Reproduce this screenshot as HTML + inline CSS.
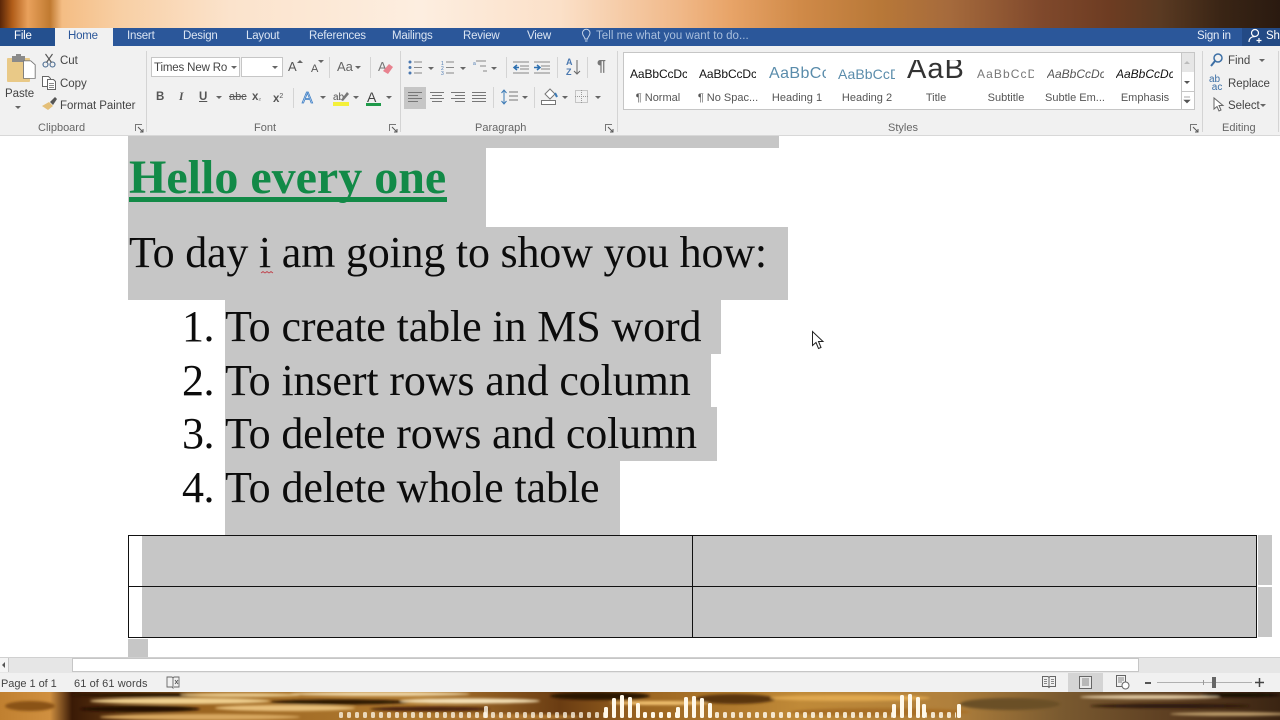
<!DOCTYPE html>
<html><head><meta charset="utf-8"><style>
html,body{margin:0;padding:0;width:1280px;height:720px;overflow:hidden;background:#fff}
body{position:relative;font-family:"Liberation Sans",sans-serif}
.a{position:absolute}
.t{position:absolute;white-space:nowrap;font-size:11.5px;color:#444;line-height:14px;letter-spacing:-.05px}
.tab{position:absolute;top:29px;color:#dbe5f3;font-size:11.5px;line-height:15px;white-space:nowrap;letter-spacing:-.2px}
.g{position:absolute;background:#c6c6c6}
.d{position:absolute;font-family:"Liberation Serif",serif;font-size:44px;line-height:50px;color:#0c0c0c;white-space:nowrap;letter-spacing:-.12px}
.sep{position:absolute;width:1px;background:#d4d4d4}
.gl{position:absolute;top:121px;font-size:11px;line-height:14px;color:#666;white-space:nowrap}
.st{position:absolute;white-space:nowrap;font-size:11px;line-height:14px;top:91px;color:#555;text-align:center;width:70px}
.sp{position:absolute;white-space:nowrap;overflow:hidden;top:66px;height:16px;line-height:16px;font-size:12px;color:#111}
svg{position:absolute;overflow:visible}
</style></head><body>
<div class="a" style="left:0;top:0;width:1280px;height:28px;background:linear-gradient(90deg,#5a2608 0,#b05c18 12px,#e9a15c 28px,#c07a30 50px,#f4bd84 62px,#f8cfa4 120px,#fbe3cc 230px,#fdeee0 420px,#fbe0c8 560px,#f0b888 680px,#e8a468 730px,#d08a48 800px,#b87838 880px,#a56a3c 950px,#80492c 1040px,#6d3c22 1110px,#5a3a22 1160px,#3a2515 1220px,#2a1a10 1280px)"></div>
<div class="a" style="left:0;top:692px;width:1280px;height:28px;overflow:hidden;background:linear-gradient(90deg,#c08030 0,#d09040 50px,#3a1a06 72px,#9a6420 200px,#b07a30 420px,#6a3c12 560px,#9a6420 640px,#c08a38 800px,#b0803c 950px,#7a5a30 1060px,#5a3c20 1180px,#3a2412 1280px)">
<svg style="left:0;top:0" width="1280" height="28"><defs><filter id="f" x="-10%" y="-100%" width="120%" height="300%"><feGaussianBlur stdDeviation="1.200"/></filter></defs>
<g filter="url(#f)">
<ellipse cx="150" cy="3" rx="80" ry="2" fill="#2a1204"/><ellipse cx="240" cy="3" rx="60" ry="2" fill="#e8c88a"/><ellipse cx="380" cy="2" rx="90" ry="2" fill="#f0d8a8"/>
<ellipse cx="180" cy="9" rx="90" ry="3" fill="#f0d090"/><ellipse cx="340" cy="10" rx="70" ry="2.500" fill="#2a1204"/><ellipse cx="470" cy="9" rx="70" ry="2.500" fill="#f5e2b8"/>
<ellipse cx="140" cy="17" rx="60" ry="3" fill="#241004"/><ellipse cx="285" cy="16" rx="70" ry="3" fill="#e8c07c"/><ellipse cx="430" cy="17" rx="60" ry="2.500" fill="#4a2408"/>
<ellipse cx="200" cy="25" rx="100" ry="3" fill="#d8a860"/><ellipse cx="500" cy="25" rx="80" ry="3" fill="#b07830"/>
<ellipse cx="600" cy="4" rx="50" ry="4" fill="#2a1406"/><ellipse cx="660" cy="11" rx="50" ry="2" fill="#f0c070"/><ellipse cx="735" cy="7" rx="40" ry="5" fill="#5a3410"/>
<ellipse cx="850" cy="6" rx="80" ry="3" fill="#e0a850"/><ellipse cx="880" cy="20" rx="90" ry="4" fill="#a87028"/>
<ellipse cx="1010" cy="12" rx="50" ry="6" fill="#6a5028"/><ellipse cx="1150" cy="5" rx="70" ry="2" fill="#e0c8a0"/><ellipse cx="1240" cy="3" rx="40" ry="2" fill="#140a04"/><ellipse cx="1170" cy="14" rx="80" ry="2" fill="#2a1608"/><ellipse cx="1230" cy="22" rx="60" ry="2" fill="#b89868"/><ellipse cx="30" cy="14" rx="25" ry="5" fill="#8a5218"/>
</g></svg></div>
<svg style="left:0;top:692px" width="1280" height="28"><defs><pattern id="dots" x="339" y="0" width="8" height="28" patternUnits="userSpaceOnUse"><rect x="0" y="20" width="4" height="6" rx="1.500" fill="#fff8e8"/></pattern></defs>
<rect x="339" y="0" width="270" height="28" fill="url(#dots)" opacity=".75"/><rect x="712" y="0" width="180" height="28" fill="url(#dots)" opacity=".85"/><rect x="926" y="0" width="30" height="28" fill="url(#dots)" opacity=".85"/><rect x="640" y="0" width="40" height="28" fill="url(#dots)"/>
<g fill="#fff8e8"><rect x="484" y="14" width="4" height="12" rx="1.500" opacity=".8"/><rect x="604" y="15" width="4" height="11" rx="1.500"/><rect x="612" y="6" width="4" height="20" rx="1.500"/><rect x="620" y="3" width="4" height="23" rx="1.500"/><rect x="628" y="5" width="4" height="21" rx="1.500"/><rect x="636" y="11" width="4" height="15" rx="1.500"/>
<rect x="676" y="15" width="4" height="11" rx="1.500"/><rect x="684" y="5" width="4" height="21" rx="1.500"/><rect x="692" y="4" width="4" height="22" rx="1.500"/><rect x="700" y="6" width="4" height="20" rx="1.500"/><rect x="708" y="11" width="4" height="15" rx="1.500"/>
<rect x="892" y="12" width="4" height="14" rx="1.500"/><rect x="900" y="3" width="4" height="23" rx="1.500"/><rect x="908" y="2" width="4" height="24" rx="1.500"/><rect x="916" y="5" width="4" height="21" rx="1.500"/><rect x="922" y="12" width="4" height="14" rx="1.500"/><rect x="957" y="12" width="4" height="14" rx="1.500"/></g></svg>

<!-- title bar / tabs -->
<div class="a" style="left:0;top:28px;width:1280px;height:18px;background:#2b579a"></div>
<div class="a" style="left:0;top:28px;width:55px;height:18px;background:#24508f"></div>
<div class="a" style="left:55px;top:28px;width:58px;height:18px;background:#f1f1f1"></div>
<div class="a" style="left:1242px;top:28px;width:38px;height:18px;background:#234a85"></div>
<div class="tab" style="left:14px;color:#fff">File</div>
<div class="tab" style="left:68px;color:#2b579a">Home</div>
<div class="tab" style="left:127px">Insert</div>
<div class="tab" style="left:183px">Design</div>
<div class="tab" style="left:246px">Layout</div>
<div class="tab" style="left:309px">References</div>
<div class="tab" style="left:392px">Mailings</div>
<div class="tab" style="left:463px">Review</div>
<div class="tab" style="left:527px">View</div>
<svg style="left:580px;top:28px" width="14" height="16" fill="none" stroke="#c5d4ea" stroke-width="1"><path d="M5 11C5 9 2.500 8 2.500 5a3.700 3.700 0 0 1 7.500 0C10 8 7.500 9 7.500 11zM5 13h2.500"/></svg>
<div class="tab" style="left:596px;color:#a9bfdd;letter-spacing:.04px">Tell me what you want to do...</div>
<div class="tab" style="left:1197px;color:#e6edf7">Sign in</div>
<svg style="left:1248px;top:28px" width="16" height="16" fill="none" stroke="#fff" stroke-width="1.200"><circle cx="7" cy="5" r="3.500"/><path d="M1 14c0-4 3-5.500 6-5.500M11 10v5M8.500 12.500h5"/></svg>
<div class="tab" style="left:1266px;color:#fff">Sh</div>

<!-- ribbon -->
<div class="a" style="left:0;top:46px;width:1280px;height:90px;background:#f1f1f1"></div>
<div class="sep" style="left:146px;top:51px;height:81px"></div>
<div class="sep" style="left:400px;top:51px;height:81px"></div>
<div class="sep" style="left:617px;top:51px;height:81px"></div>
<div class="sep" style="left:1202px;top:51px;height:81px"></div>
<div class="sep" style="left:1278px;top:51px;height:81px"></div>

<!-- clipboard -->
<svg style="left:6px;top:54px" width="30" height="30"><rect x="1" y="4" width="23" height="24" rx="1" fill="#e9c987"/><rect x="6" y="2" width="13" height="6" fill="#8a8a8a"/><rect x="10" y="0" width="5" height="3" fill="#8a8a8a"/><path d="M15 11h8l5 5v17H15z" transform="translate(4,-2) scale(.9,.8)" fill="#fff" stroke="#777"/></svg>
<div class="t" style="left:5px;top:87px">Paste</div>
<svg style="left:15px;top:106px" width="8" height="5"><path d="M0 0h6L3 3z" fill="#666"/></svg>
<svg style="left:42px;top:53px" width="16" height="15" fill="none" stroke="#46688f" stroke-width="1.100"><circle cx="3.500" cy="11.500" r="2.500"/><circle cx="10.500" cy="11.500" r="2.500"/><path d="M4.500 9.500L10.500 1M9.500 9.500L3.500 1" stroke="#555"/></svg>
<div class="t" style="left:60px;top:54px">Cut</div>
<svg style="left:42px;top:76px" width="15" height="14" fill="#fff" stroke="#666"><path d="M.5.500h6l2 2v8h-8z"/><path d="M5.500 3.500h6l2 2v8h-8z"/><path d="M7 7.500h5M7 9.500h5M7 11.500h5" stroke-width=".8"/></svg>
<div class="t" style="left:60px;top:77px">Copy</div>
<svg style="left:42px;top:97px" width="16" height="14"><path d="M0 9l7-4 4 4-5 4z" fill="#e4bf78"/><path d="M8 5l5-5 2 2-4 6z" fill="#555"/></svg>
<div class="t" style="left:60px;top:99px">Format Painter</div>
<div class="gl" style="left:38px">Clipboard</div>
<svg style="left:135px;top:124px" width="9" height="9" fill="none" stroke="#777"><path d="M.5 7V.5H7"/><path d="M3 3l5 5M5 8h3V5" stroke="#555"/></svg>

<!-- font -->
<div class="a" style="left:151px;top:57px;width:89px;height:20px;background:#fff;border:1px solid #c6c6c6;box-sizing:border-box"></div>
<div class="a" style="left:241px;top:57px;width:42px;height:20px;background:#fff;border:1px solid #c6c6c6;box-sizing:border-box"></div>
<div class="t" style="left:154px;top:61px;font-size:11.500px;letter-spacing:-.15px">Times New Ro</div>
<svg style="left:231px;top:66px" width="6" height="4"><path d="M0 0h6L3 3z" fill="#666"/></svg>
<svg style="left:272px;top:66px" width="6" height="4"><path d="M0 0h6L3 3z" fill="#666"/></svg>
<div class="t" style="left:288px;top:60px;font-size:13px;color:#555">A</div>
<svg style="left:297px;top:60px" width="6" height="4"><path d="M0 3L3 0l3 3z" fill="#666"/></svg>
<div class="t" style="left:311px;top:62px;font-size:11px;color:#555">A</div>
<svg style="left:318px;top:60px" width="6" height="4"><path d="M0 0h6L3 3z" fill="#666"/></svg>
<div class="sep" style="left:329px;top:57px;height:21px"></div>
<div class="t" style="left:337px;top:60px;font-size:13px;color:#666">Aa</div>
<svg style="left:355px;top:66px" width="6" height="4"><path d="M0 0h6L3 3z" fill="#666"/></svg>
<div class="sep" style="left:370px;top:57px;height:21px"></div>
<svg style="left:378px;top:59px" width="16" height="17"><text x="0" y="12" font-size="13" fill="#777" font-family="Liberation Sans">A</text><path d="M5 12l6-7 4 3-5 7z" fill="#e8828f"/></svg>
<div class="t" style="left:156px;top:90px;font-weight:bold;color:#555">B</div>
<div class="t" style="left:179px;top:90px;font-style:italic;font-family:'Liberation Serif',serif;font-weight:bold;color:#555">I</div>
<div class="t" style="left:199px;top:90px;text-decoration:underline;font-weight:bold;color:#555">U</div>
<svg style="left:216px;top:96px" width="6" height="4"><path d="M0 0h6L3 3z" fill="#666"/></svg>
<div class="t" style="left:229px;top:90px;text-decoration:line-through;color:#555;font-size:11px">abc</div>
<div class="t" style="left:252px;top:90px;font-weight:bold;color:#555">x<span style="font-size:7px;font-weight:normal">₂</span></div>
<div class="t" style="left:273px;top:90px;font-weight:bold;color:#555">x<span style="font-size:7px;font-weight:normal;vertical-align:4px">2</span></div>
<div class="sep" style="left:293px;top:88px;height:20px"></div>
<svg style="left:301px;top:89px" width="15" height="16"><text x="1" y="14" font-size="16" fill="#cfe0f5" stroke="#3f7fc4" stroke-width=".8" font-family="Liberation Sans">A</text></svg>
<svg style="left:320px;top:96px" width="6" height="4"><path d="M0 0h6L3 3z" fill="#666"/></svg>
<svg style="left:333px;top:90px" width="17" height="16"><text x="0" y="10" font-size="10" fill="#555" font-family="Liberation Sans">ab</text><path d="M8 10L14 2l2 2-6 7z" fill="#777"/><rect x="0" y="12" width="16" height="4" fill="#f4f03a"/></svg>
<svg style="left:353px;top:96px" width="6" height="4"><path d="M0 0h6L3 3z" fill="#666"/></svg>
<svg style="left:366px;top:90px" width="16" height="16"><text x="1" y="12" font-size="14" fill="#444" font-family="Liberation Sans">A</text><rect x="0" y="13" width="15" height="3" fill="#1f9a4a"/></svg>
<svg style="left:386px;top:96px" width="6" height="4"><path d="M0 0h6L3 3z" fill="#666"/></svg>
<div class="gl" style="left:254px">Font</div>
<svg style="left:389px;top:124px" width="9" height="9" fill="none" stroke="#777"><path d="M.5 7V.5H7"/><path d="M3 3l5 5M5 8h3V5" stroke="#555"/></svg>

<!-- paragraph -->
<svg style="left:408px;top:59px" width="200" height="20" fill="none" stroke="#888" stroke-width="1">
<circle cx="2" cy="3" r="1.500" fill="#4a78b0" stroke="none"/><circle cx="2" cy="8.500" r="1.500" fill="#4a78b0" stroke="none"/><circle cx="2" cy="14" r="1.500" fill="#4a78b0" stroke="none"/><path d="M6 3h8M6 8.500h8M6 14h8"/>
<path d="M20 8h6L23 11z" fill="#666" stroke="none"/>
<text x="33" y="6" font-size="5" fill="#4a78b0" stroke="none" font-family="Liberation Sans">1</text><text x="33" y="11" font-size="5" fill="#4a78b0" stroke="none" font-family="Liberation Sans">2</text><text x="33" y="16" font-size="5" fill="#4a78b0" stroke="none" font-family="Liberation Sans">3</text><path d="M38 3h8M38 8.500h8M38 14h8"/>
<path d="M52 8h6L55 11z" fill="#666" stroke="none"/>
<text x="65" y="6" font-size="5" fill="#4a78b0" stroke="none" font-family="Liberation Sans">a</text><path d="M68 2h10M72 7h6M75 12h4"/><path d="M83 8h6L86 11z" fill="#666" stroke="none"/>
<path d="M105 3h16M112 7h9M112 10h9M105 14h16" /><path d="M111 8.500h-5M109 6l-3 2.500 3 2.500" stroke="#2c6fb0" stroke-width="1.500"/>
<path d="M126 3h16M133 7h9M133 10h9M126 14h16" /><path d="M126 8.500h5M129 6l3 2.500-3 2.500" stroke="#2c6fb0" stroke-width="1.500"/>
</svg>
<div class="sep" style="left:506px;top:57px;height:21px"></div>
<div class="sep" style="left:557px;top:57px;height:21px"></div>
<div class="t" style="left:566px;top:57px;font-size:9px;line-height:10px;color:#4a78b0;font-weight:bold">A<br>Z</div>
<svg style="left:574px;top:60px" width="6" height="16" fill="none" stroke="#666"><path d="M3 0v14M0 11l3 3 3-3"/></svg>
<div class="sep" style="left:587px;top:57px;height:21px"></div>
<div class="t" style="left:597px;top:57px;font-size:16px;line-height:20px;font-family:'Liberation Sans';color:#777;font-weight:bold">¶</div>
<div class="a" style="left:404px;top:87px;width:22px;height:22px;background:#c6c6c6"></div>
<svg style="left:407px;top:91px" width="86" height="14" fill="none" stroke="#777" stroke-width="1"><path d="M1 1.500h14M1 4.500h10M1 7.500h14M1 10.500h10"/><path d="M23 1.500h14M25 4.500h10M23 7.500h14M25 10.500h10"/><path d="M44 1.500h14M48 4.500h10M44 7.500h14M48 10.500h10"/><path d="M65 1.500h14M65 4.500h14M65 7.500h14M65 10.500h14"/></svg>
<div class="sep" style="left:493px;top:87px;height:21px"></div>
<svg style="left:501px;top:89px" width="24" height="18" fill="none"><path d="M3 1v14M.5 4L3 1l2.500 3M.5 12L3 15l2.500-3" stroke="#3c7ab5"/><path d="M8 3h9M8 7h9M8 11h9" stroke="#777"/><path d="M21 7h6L24 10z" fill="#666"/></svg>
<div class="sep" style="left:534px;top:87px;height:21px"></div>
<svg style="left:541px;top:88px" width="24" height="18" fill="none" stroke="#777"><path d="M4 6l5-5 5 5-5 5z" fill="#fff"/><path d="M14 5l2 4" stroke="#3c7ab5" stroke-width="2"/><rect x=".5" y="12.500" width="14" height="4" fill="#fff"/></svg>
<svg style="left:562px;top:96px" width="6" height="4"><path d="M0 0h6L3 3z" fill="#666"/></svg>
<svg style="left:575px;top:90px" width="13" height="14" fill="none" stroke="#999" stroke-dasharray="1 1"><rect x=".5" y=".5" width="12" height="12"/><path d="M6.500 0v13M0 6.500h13"/></svg>
<svg style="left:595px;top:96px" width="6" height="4"><path d="M0 0h6L3 3z" fill="#666"/></svg>
<div class="gl" style="left:475px">Paragraph</div>
<svg style="left:605px;top:124px" width="9" height="9" fill="none" stroke="#777"><path d="M.5 7V.5H7"/><path d="M3 3l5 5M5 8h3V5" stroke="#555"/></svg>

<!-- styles -->
<div class="a" style="left:623px;top:52px;width:559px;height:58px;background:#fff;border:1px solid #c6c6c6;box-sizing:border-box"></div>
<div class="sp" style="left:630px;width:57px;letter-spacing:-.1px">AaBbCcDc</div>
<div class="sp" style="left:699px;width:57px;letter-spacing:-.1px">AaBbCcDc</div>
<div class="sp" style="left:769px;width:57px;font-size:16px;color:#5a8cab;letter-spacing:.4px">AaBbCc</div>
<div class="sp" style="left:838px;width:57px;font-size:14px;color:#5a8cab;letter-spacing:.1px">AaBbCcD</div>
<div class="sp" style="left:907px;top:60px;width:56px;height:20px;line-height:18px;font-size:29px;color:#333;letter-spacing:1px">AaB</div>
<div class="sp" style="left:977px;width:57px;color:#777;letter-spacing:1.100px;font-size:12px">AaBbCcD</div>
<div class="sp" style="left:1047px;width:57px;font-style:italic;color:#555">AaBbCcDc</div>
<div class="sp" style="left:1116px;width:57px;font-style:italic;color:#111">AaBbCcDc</div>
<div class="st" style="left:623px">¶ Normal</div>
<div class="st" style="left:693px">¶ No Spac...</div>
<div class="st" style="left:762px">Heading 1</div>
<div class="st" style="left:832px">Heading 2</div>
<div class="st" style="left:901px">Title</div>
<div class="st" style="left:971px">Subtitle</div>
<div class="st" style="left:1040px">Subtle Em...</div>
<div class="st" style="left:1110px">Emphasis</div>
<div class="a" style="left:1181px;top:52px;width:14px;height:58px;background:#fff;border:1px solid #c6c6c6;box-sizing:border-box"></div>
<div class="a" style="left:1182px;top:53px;width:12px;height:19px;background:#e6e6e6"></div>
<div class="a" style="left:1182px;top:91px;width:12px;height:1px;background:#c6c6c6"></div>
<svg style="left:1184px;top:61px" width="7" height="4"><path d="M0 3L3 0l3 3z" fill="#bbb"/></svg>
<svg style="left:1184px;top:81px" width="7" height="4"><path d="M0 0h6L3 3z" fill="#555"/></svg>
<svg style="left:1184px;top:97px" width="7" height="8"><path d="M0 0h6M0 3h6L3 6z" fill="#555" stroke="#555" stroke-width=".6"/></svg>
<div class="gl" style="left:888px">Styles</div>
<svg style="left:1190px;top:124px" width="9" height="9" fill="none" stroke="#777"><path d="M.5 7V.5H7"/><path d="M3 3l5 5M5 8h3V5" stroke="#555"/></svg>

<!-- editing -->
<svg style="left:1210px;top:53px" width="14" height="14" fill="none" stroke="#3c6fa5" stroke-width="1.500"><circle cx="8" cy="5" r="4"/><path d="M5 8l-4 5" stroke-width="2"/></svg>
<div class="t" style="left:1228px;top:54px">Find</div>
<svg style="left:1259px;top:59px" width="6" height="4"><path d="M0 0h6L3 3z" fill="#666"/></svg>
<div class="t" style="left:1209px;top:76px;font-size:10px;line-height:8px;color:#3c6fa5;letter-spacing:0;">ab<br>&nbsp;ac</div>
<div class="t" style="left:1228px;top:77px">Replace</div>
<svg style="left:1213px;top:97px" width="12" height="15" fill="#fff" stroke="#666"><path d="M1 1v11l3-2.500 2 4.500 2-1-2-4.500h4z"/></svg>
<div class="t" style="left:1228px;top:99px">Select</div>
<svg style="left:1260px;top:104px" width="6" height="4"><path d="M0 0h6L3 3z" fill="#666"/></svg>
<div class="gl" style="left:1222px">Editing</div>
<div class="a" style="left:0;top:135px;width:1280px;height:1px;background:#d8d8d8"></div>

<!-- selection -->
<div class="g" style="left:128px;top:136px;width:651px;height:12px"></div>
<div class="g" style="left:128px;top:148px;width:358px;height:79px"></div>
<div class="g" style="left:128px;top:227px;width:660px;height:73px"></div>
<div class="g" style="left:225px;top:300px;width:496px;height:54px"></div>
<div class="g" style="left:225px;top:354px;width:486px;height:53px"></div>
<div class="g" style="left:225px;top:407px;width:492px;height:54px"></div>
<div class="g" style="left:225px;top:461px;width:395px;height:74px"></div>
<div class="g" style="left:142px;top:535px;width:1114px;height:102px"></div>
<div class="g" style="left:1258px;top:535px;width:14px;height:50px"></div>
<div class="g" style="left:1258px;top:587px;width:14px;height:50px"></div>
<div class="g" style="left:128px;top:639px;width:20px;height:18px"></div>

<!-- document text -->
<div class="d" style="left:129px;top:153px;font-size:48px;font-weight:bold;color:#128a47;letter-spacing:0">Hello every one</div>
<div class="a" style="left:129px;top:197px;width:318px;height:5px;background:#128a47"></div>
<div class="d" style="left:129px;top:228px;letter-spacing:-.2px">To day i am going to show you how:</div>
<svg style="left:261px;top:271px" width="14" height="4" fill="none" stroke="#c0404a" stroke-width=".8"><path d="M0 2l2-1.500 2 1.500 2-1.500 2 1.500 2-1.500 2 1.500"/></svg>
<div class="d" style="left:182px;top:302px;letter-spacing:-.5px">1.</div><div class="d" style="left:225px;top:302px">To create table in MS word</div>
<div class="d" style="left:182px;top:356px;letter-spacing:-.5px">2.</div><div class="d" style="left:225px;top:356px">To insert rows and column</div>
<div class="d" style="left:182px;top:409px;letter-spacing:-.5px">3.</div><div class="d" style="left:225px;top:409px;letter-spacing:-.16px">To delete rows and column</div>
<div class="d" style="left:182px;top:463px;letter-spacing:-.5px">4.</div><div class="d" style="left:225px;top:463px">To delete whole table</div>

<!-- table -->
<div class="a" style="left:128px;top:535px;width:1129px;height:103px;border:1px solid #111;box-sizing:border-box"></div>
<div class="a" style="left:128px;top:586px;width:1129px;height:1px;background:#111"></div>
<div class="a" style="left:692px;top:535px;width:1px;height:103px;background:#111"></div>

<!-- cursor -->
<svg style="left:812px;top:331px" width="12" height="20" fill="#fff" stroke="#222" stroke-width="1"><path d="M.5.500v14l3.500-3 2.500 6 2.500-1-2.500-6h4.500z"/></svg>

<!-- scrollbar -->
<div class="a" style="left:0;top:657px;width:1280px;height:16px;background:#e6e6e6;border-top:1px solid #d0d0d0;box-sizing:border-box"></div>
<div class="a" style="left:0;top:658px;width:9px;height:14px;background:#f4f4f4;border-right:1px solid #c6c6c6;box-sizing:border-box"></div>
<svg style="left:2px;top:662px" width="4" height="7"><path d="M3 0v6L0 3z" fill="#555"/></svg>
<div class="a" style="left:72px;top:658px;width:1067px;height:14px;background:#fff;border:1px solid #c6c6c6;box-sizing:border-box"></div>

<!-- status bar -->
<div class="a" style="left:0;top:673px;width:1280px;height:19px;background:#f1f1f1"></div>
<div class="t" style="left:1px;top:677px;font-size:11px;color:#444">Page 1 of 1</div>
<div class="t" style="left:74px;top:677px;font-size:11px;color:#444;letter-spacing:.1px">61 of 61 words</div>
<svg style="left:166px;top:676px" width="15" height="14" fill="none" stroke="#666" stroke-width=".9"><path d="M1 1h5l1 1v10l-1-1H1zM7 2l1-1h5v10H8"/><path d="M9 4l3 4M12 4L9 8" stroke="#555"/></svg>
<svg style="left:1042px;top:676px" width="14" height="13" fill="none" stroke="#666"><path d="M.5.500h5.500l1 1 1-1h5.500v10H8l-1 1-1-1H.5zM7 1.500v10"/><path d="M2 3.500h3M2 5.500h3M2 7.500h3M9 3.500h3M9 5.500h3M9 7.500h3" stroke-width=".7"/></svg>
<div class="a" style="left:1068px;top:673px;width:35px;height:19px;background:#d4d4d4"></div>
<svg style="left:1079px;top:676px" width="14" height="13" fill="#e8e8e8" stroke="#666"><rect x=".5" y=".5" width="12" height="12"/><path d="M3 3h7M3 5h7M3 7h7M3 9h7" stroke-width=".7"/></svg>
<svg style="left:1116px;top:675px" width="14" height="15" fill="none" stroke="#666"><path d="M.5.500h9v11h-9z"/><path d="M2 3h6M2 5h6M2 7h4" stroke-width=".7"/><circle cx="9.500" cy="10.500" r="3.500" fill="#fff"/></svg>
<div class="a" style="left:1145px;top:682px;width:6px;height:2px;background:#555"></div>
<div class="a" style="left:1157px;top:682px;width:95px;height:1px;background:#b0b0b0"></div>
<div class="a" style="left:1203px;top:680px;width:1px;height:5px;background:#999"></div>
<div class="a" style="left:1212px;top:677px;width:4px;height:11px;background:#666"></div>
<svg style="left:1255px;top:678px" width="9" height="9" stroke="#444" stroke-width="1.500"><path d="M0 4.500h9M4.500 0v9"/></svg>
</body></html>
